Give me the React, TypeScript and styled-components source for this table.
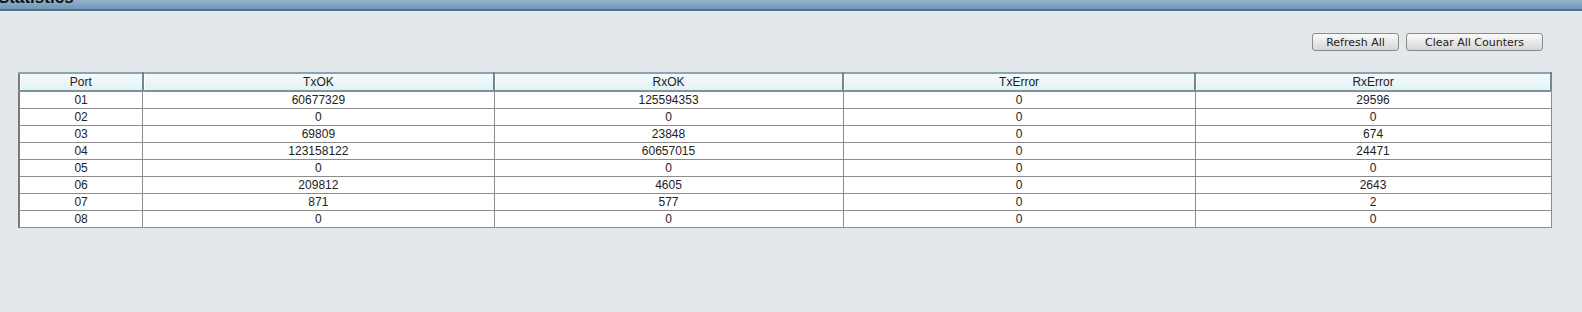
import React from 'react';
import styled, { createGlobalStyle } from 'styled-components';

const GlobalStyle = createGlobalStyle`
  html, body {
    margin: 0;
    padding: 0;
    background: #e3e8ea;
  }
  body {
    font-family: "Liberation Sans", Arial, sans-serif;
  }
`;

const Page = styled.div`
  width: 1582px;
  height: 312px;
  background: #e3e8ea;
  overflow: hidden;
`;

const TitleBar = styled.div`
  height: 9px;
  background: linear-gradient(#93b3cb, #6f97b6);
  border-bottom: 2px solid #4f7189;
  overflow: hidden;
`;

const Title = styled.h1`
  margin: -12px 0 0 -2px;
  font-size: 17px;
  line-height: 20px;
  font-weight: bold;
  color: #111;
`;

const Content = styled.div`
  padding: 22px 30px 0 18px;
`;

const Toolbar = styled.div`
  display: flex;
  justify-content: flex-end;
  gap: 7px;
  padding-right: 9px;
`;

const Button = styled.button<{ $w: number }>`
  width: ${p => p.$w}px;
  height: 18px;
  padding: 0;
  font-family: "DejaVu Sans", Verdana, sans-serif;
  font-size: 11px;
  color: #222;
  background: linear-gradient(#fbfbfb, #e6e6e6 55%, #d6d6d6);
  border: 1px solid #8a8a8a;
  border-radius: 3px;
  cursor: pointer;
`;

const Table = styled.table`
  margin-top: 21px;
  width: 1534px;
  border-collapse: collapse;
  table-layout: fixed;
  border-left: 2px solid #7a7a7a;
  font-family: "Liberation Sans", Arial, sans-serif;
  font-size: 12px;
  color: #222;
`;

const HeadCell = styled.th<{ $w: string }>`
  width: ${p => p.$w};
  height: 16px;
  padding: 0;
  font-weight: normal;
  text-align: center;
  background: linear-gradient(#f4fbfc, #e4f1f3);
  border-top: 2px solid #8aa5b0;
  border-bottom: 2px solid #7b939c;
  border-right: 2px solid #6f8a95;
  border-left: 1px solid #cfe3e8;
  box-shadow: inset 1px 0 0 #ffffff;
`;

const Cell = styled.td`
  height: 16px;
  padding: 0;
  line-height: 16px;
  text-align: center;
  background: #fff;
  border: 1px solid #8c8c8c;
`;

const columns = [
  { name: 'Port', w: '8%' },
  { name: 'TxOK', w: '22.95%' },
  { name: 'RxOK', w: '22.8%' },
  { name: 'TxError', w: '23%' },
  { name: 'RxError', w: '23.25%' },
];

const rows = [
  ['01', '60677329', '125594353', '0', '29596'],
  ['02', '0', '0', '0', '0'],
  ['03', '69809', '23848', '0', '674'],
  ['04', '123158122', '60657015', '0', '24471'],
  ['05', '0', '0', '0', '0'],
  ['06', '209812', '4605', '0', '2643'],
  ['07', '871', '577', '0', '2'],
  ['08', '0', '0', '0', '0'],
];

const App: React.FC = () => {
  return (
    <Page>
      <GlobalStyle />
      <TitleBar>
        <Title>Statistics</Title>
      </TitleBar>
      <Content>
        <Toolbar>
          <Button $w={87}>Refresh All</Button>
          <Button $w={137}>Clear All Counters</Button>
        </Toolbar>
        <Table>
          <thead>
            <tr>
              {columns.map(c => (
                <HeadCell key={c.name} $w={c.w}>{c.name}</HeadCell>
              ))}
            </tr>
          </thead>
          <tbody>
            {rows.map(r => (
              <tr key={r[0]}>
                {r.map((v, i) => (
                  <Cell key={i}>{v}</Cell>
                ))}
              </tr>
            ))}
          </tbody>
        </Table>
      </Content>
    </Page>
  );
};

export default App;
